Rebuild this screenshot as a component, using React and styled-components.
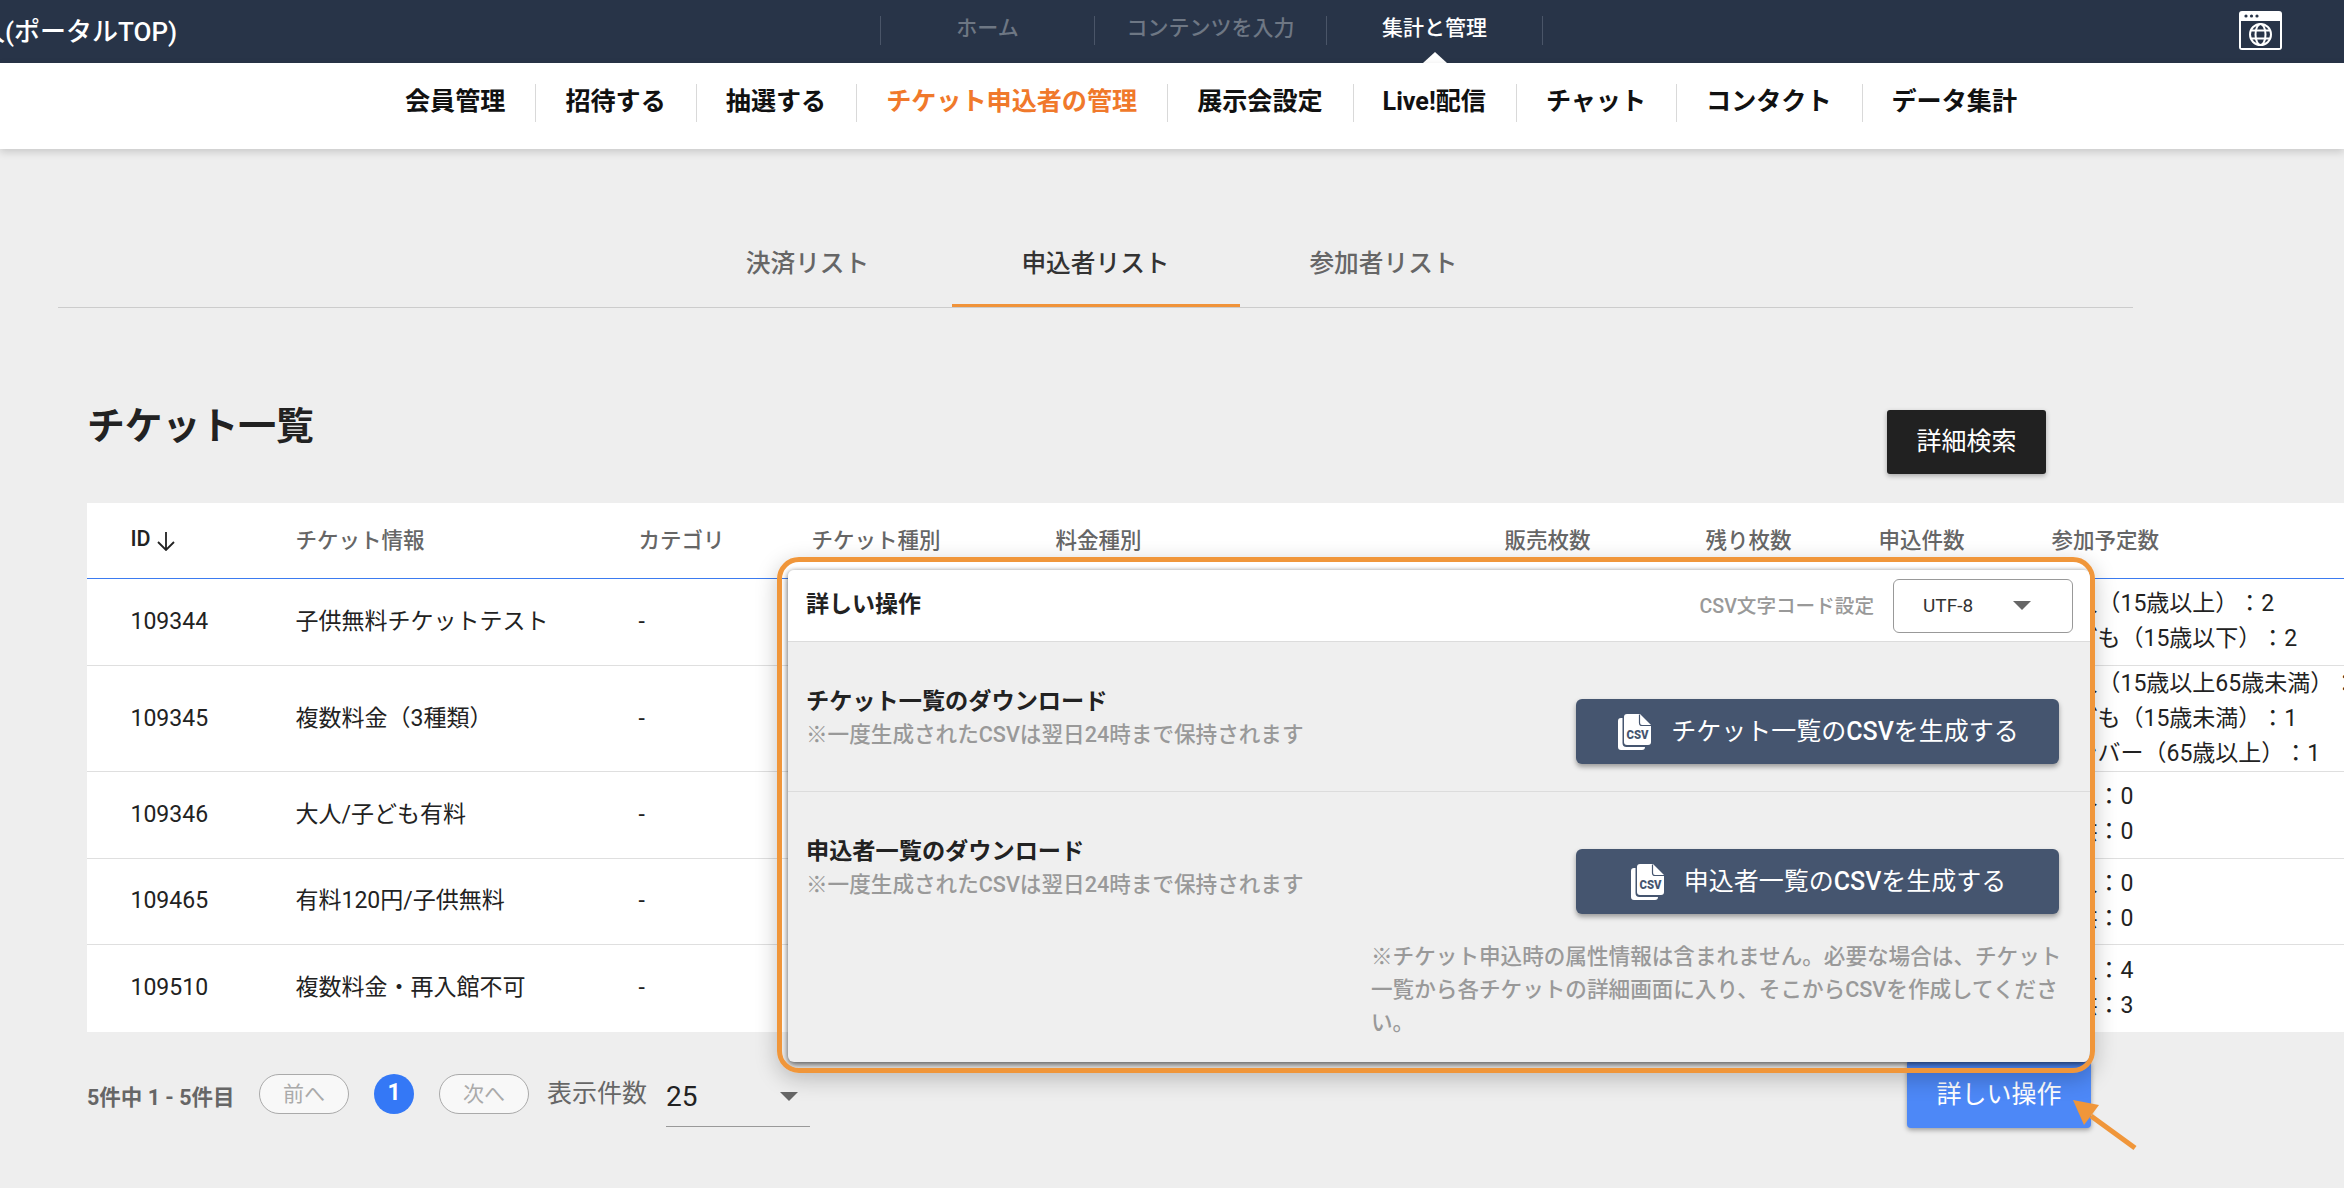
import React from 'react';
import styled, { createGlobalStyle } from 'styled-components';

const Global = createGlobalStyle`
  html, body { margin: 0; padding: 0; background: #eeeeee; }
  * { box-sizing: border-box; }
  body {
    font-family: Roboto, "Noto Sans CJK JP", sans-serif;
    color: #222;
    text-spacing-trim: space-all;
  }
`;

const Page = styled.div`
  position: relative;
  width: 2344px;
  height: 1188px;
  overflow: hidden;
  background: #eeeeee;
`;

/* ---------- top bar ---------- */
const TopBar = styled.header`
  display: flex;
  height: 63px;
  background: #283448;
  overflow: hidden;
`;
const SiteTitle = styled.div`
  flex: none;
  width: 880px;
  height: 63px;
  line-height: 65px;
  text-indent: -21px;
  font-size: 26px;
  font-weight: 500;
  color: #fff;
  white-space: nowrap;
`;
const TopNav = styled.nav`
  display: flex;
  height: 29px;
  margin-top: 16px;
  border-right: 1px solid #4a5568;
`;
const TopItem = styled.a`
  position: relative;
  display: block;
  width: ${p => p.$w}px;
  border-left: 1px solid #4a5568;
  text-align: center;
  font-size: 21px;
  line-height: 25px;
  font-weight: 500;
  color: ${p => (p.$active ? '#ffffff' : '#6e7784')};
  ${p => p.$active && `
    &::after {
      content: '';
      position: absolute;
      left: 50%;
      bottom: -18px;
      margin-left: -12px;
      border-left: 12px solid transparent;
      border-right: 12px solid transparent;
      border-bottom: 11px solid #fff;
    }
  `}
`;
const GlobeButton = styled.div`
  margin: 11px 62px 0 auto;
  width: 43px;
  height: 39px;
  svg { display: block; }
`;

/* ---------- sub nav ---------- */
const SubNav = styled.nav`
  position: relative;
  display: flex;
  height: 86px;
  padding: 21px 0 0 375px;
  background: #fff;
  box-shadow: 0 3px 8px rgba(0, 0, 0, 0.16);
`;
const SubItem = styled.a`
  display: block;
  height: 38px;
  padding: 0 30px 0 29px;
  border-left: ${p => (p.$first ? '1px solid transparent' : '1px solid #d9d9d9')};
  font-size: 25.1px;
  line-height: 36px;
  font-weight: 700;
  white-space: nowrap;
  color: ${p => (p.$active ? '#f0792b' : '#111')};
`;

/* ---------- tabs ---------- */
const Tabs = styled.div`
  display: flex;
  justify-content: center;
  width: 2075px;
  height: 97px;
  margin: 62px 0 0 58px;
  border-bottom: 1px solid #cccccc;
`;
const Tab = styled.a`
  display: block;
  width: 288px;
  height: 96px;
  padding-top: 36px;
  text-align: center;
  font-size: 24.7px;
  line-height: 34px;
  font-weight: 500;
  color: ${p => (p.$active ? '#333' : '#666')};
  border-bottom: 3px solid ${p => (p.$active ? '#f0933a' : 'transparent')};
`;

/* ---------- heading ---------- */
const TitleRow = styled.div`
  display: flex;
  justify-content: space-between;
  width: 1959px;
  height: 64px;
  margin: 102px 0 0 87px;
`;
const Heading = styled.h1`
  margin: 0;
  font-size: 37.8px;
  line-height: 32px;
  font-weight: 700;
  color: #222;
`;
const DarkButton = styled.button`
  width: 159px;
  height: 64px;
  padding: 0 0 6px;
  border: 0;
  border-radius: 3px;
  background: #212121;
  color: #fff;
  font: 400 25px Roboto, "Noto Sans CJK JP", sans-serif;
  box-shadow: 0 2px 5px rgba(0, 0, 0, 0.3);
`;

/* ---------- table ---------- */
const Table = styled.div`
  width: 2257px;
  margin: 29px 0 0 87px;
  background: #fff;
`;
const cols = '165px 343px 173px 244px 449px 201px 173px 173px 292px';
const HeadRow = styled.div`
  display: grid;
  grid-template-columns: ${cols};
  align-items: center;
  height: 76px;
  padding: 0 0 5px 43.5px;
  border-bottom: 1.5px solid #3b7bf0;
`;
const HeadCell = styled.div`
  display: flex;
  align-items: center;
  gap: 5px;
  font-size: 21.5px;
  font-weight: 500;
  white-space: nowrap;
  color: ${p => (p.$dark ? '#222' : '#666')};
  svg { margin-top: 5px; }
`;
const Row = styled.div`
  display: grid;
  grid-template-columns: ${cols};
  align-items: center;
  height: ${p => p.$h}px;
  padding: 0 0 2px 43.5px;
  border-bottom: ${p => (p.$last ? '0' : '1.5px solid #dfdfdf')};
`;
const Cell = styled.div`
  font-size: 23px;
  line-height: 35px;
  color: #222;
  white-space: nowrap;
`;

/* ---------- pagination ---------- */
const Footer = styled.div`
  display: flex;
  align-items: center;
  width: 2004px;
  height: 68px;
  margin: 28px 0 0 87px;
`;
const Count = styled.div`
  width: 172px;
  padding-top: 2px;
  font-size: 21.5px;
  font-weight: 700;
  color: #666;
  white-space: nowrap;
`;
const PageBtn = styled.div`
  width: 90px;
  height: 40px;
  border: 1px solid #aaa;
  border-radius: 20px;
  background: #f8f8f8;
  color: #aaa;
  text-align: center;
  font-size: 21px;
  line-height: 38px;
`;
const PageNum = styled.div`
  width: 40px;
  height: 40px;
  margin: 0 25px;
  border-radius: 50%;
  background: #3478f6;
  color: #fff;
  text-align: center;
  font-size: 23px;
  font-weight: 700;
  line-height: 38px;
`;
const PerPageLabel = styled.div`
  width: 119px;
  margin: -6px 0 0 18px;
  font-size: 25px;
  color: #666;
  white-space: nowrap;
`;
const PerPage = styled.div`
  display: flex;
  align-items: center;
  justify-content: space-between;
  align-self: flex-end;
  width: 144px;
  height: 50px;
  margin-bottom: 1px;
  padding: 0 12px 10px 0;
  border-bottom: 1px solid #999;
  font-size: 28px;
  color: #222;
`;
const Caret = styled.span`
  width: 0;
  height: 0;
  border-left: 9.5px solid transparent;
  border-right: 9.5px solid transparent;
  border-top: 9.5px solid #666;
`;
const BlueButton = styled.button`
  width: 184px;
  height: 68px;
  margin-left: auto;
  padding: 0 0 4px;
  border: 0;
  border-radius: 4px;
  background: #4d88f7;
  color: #fff;
  font: 400 25px Roboto, "Noto Sans CJK JP", sans-serif;
  box-shadow: 0 2px 5px rgba(0, 0, 0, 0.35);
`;

/* ---------- popover ---------- */
const Frame = styled.div`
  position: absolute;
  left: 777px;
  top: 557px;
  width: 1318px;
  height: 516px;
  padding: 8px 0 6px 6px;
  border: 5px solid #f0963a;
  border-radius: 22px;
  overflow: hidden;
  box-shadow: 0 6px 22px rgba(0, 0, 0, 0.22);
`;
const Panel = styled.div`
  display: flex;
  flex-direction: column;
  height: 492px;
  border-radius: 6px;
  background: #efefef;
  box-shadow: 0 3px 7px rgba(0, 0, 0, 0.55), 0 0 4px rgba(0, 0, 0, 0.2);
`;
const PanelHead = styled.div`
  display: flex;
  align-items: center;
  height: 72px;
  padding: 0 17px 0 18px;
  border-bottom: 1.5px solid #dcdcdc;
  border-radius: 6px 6px 0 0;
  background: #fff;
`;
const PanelTitle = styled.div`
  margin-top: -8px;
  font-size: 23px;
  font-weight: 700;
  color: #222;
`;
const EncodingLabel = styled.div`
  margin-left: auto;
  margin-top: -3px;
  font-size: 19.6px;
  font-weight: 500;
  color: #999;
`;
const EncodingSelect = styled.div`
  display: flex;
  align-items: center;
  justify-content: space-between;
  width: 180px;
  height: 54px;
  margin-left: 19px;
  padding: 0 41px 0 29px;
  border: 1px solid #999;
  border-radius: 6px;
  background: #fff;
  font-size: 19px;
  color: #333;
`;
const Section = styled.div`
  display: flex;
  justify-content: space-between;
  height: ${p => p.$h}px;
  padding: ${p => p.$pt}px 31px 0 18px;
  border-bottom: ${p => (p.$line ? '1.5px solid #dcdcdc' : '0')};
`;
const SectionTitle = styled.div`
  font-size: 23.2px;
  line-height: 34px;
  font-weight: 700;
  color: #222;
`;
const SectionSub = styled.div`
  font-size: 21.6px;
  line-height: 33px;
  font-weight: 500;
  color: #999;
  white-space: nowrap;
`;
const CsvButton = styled.button`
  display: flex;
  align-items: center;
  justify-content: center;
  gap: 20px;
  width: 483px;
  height: 65px;
  margin-top: ${p => p.$mt}px;
  padding: 0 0 0 2px;
  border: 0;
  border-radius: 6px;
  background: #45556f;
  color: #fff;
  font: 400 25px Roboto, "Noto Sans CJK JP", sans-serif;
  box-shadow: 0 3px 5px rgba(0, 0, 0, 0.35);
  svg { display: block; flex: none; }
  span { margin-top: -5px; }
  b { font-weight: 500; }
`;
const Note = styled.div`
  width: 702px;
  margin: 26px 0 0 583px;
  font-size: 21.6px;
  line-height: 33px;
  font-weight: 500;
  color: #999;
`;
const ArrowMark = styled.svg`
  position: absolute;
  left: 2060px;
  top: 1090px;
`;

/* ---------- icons ---------- */
const CsvIcon = () => (
  <svg width="33" height="36" viewBox="0 0 33 36">
    <path d="M3 4h1.5v25a4 4 0 0 0 4 4H27a3 3 0 0 1-3 3H3a3 3 0 0 1-3-3V7a3 3 0 0 1 3-3z" fill="#fff" />
    <path d="M9 0H22L33 11V28a3 3 0 0 1-3 3H9a3 3 0 0 1-3-3V3a3 3 0 0 1 3-3z" fill="#fff" />
    <path d="M21.5 .5V9a2.5 2.5 0 0 0 2.5 2.5H33" fill="none" stroke="#45556f" strokeWidth="1.2" />
    <text x="19.5" y="24.5" textAnchor="middle" fontFamily="Roboto, sans-serif" fontWeight="900" fontSize="12" textLength="22" lengthAdjust="spacingAndGlyphs" fill="#45556f">CSV</text>
  </svg>
);
const GlobeIcon = () => (
  <svg width="43" height="39" viewBox="0 0 43 39">
    <rect width="43" height="39" rx="3" fill="#fff" />
    <rect x="2" y="10" width="39" height="27" fill="#283448" />
    <circle cx="7" cy="5" r="1.6" fill="#283448" />
    <circle cx="12.5" cy="5" r="1.6" fill="#283448" />
    <circle cx="18" cy="5" r="1.6" fill="#283448" />
    <g fill="none" stroke="#fff" strokeWidth="2">
      <circle cx="21.5" cy="23.5" r="10.5" />
      <ellipse cx="21.5" cy="23.5" rx="5" ry="10.5" />
      <path d="M12 19.5H31M12 27.5H31" />
    </g>
  </svg>
);
const SortArrow = () => (
  <svg width="20" height="20" viewBox="0 0 20 20" fill="none" stroke="#222" strokeWidth="1.8">
    <path d="M10 1V19M2 11L10 19L18 11" />
  </svg>
);

const tops = [
  { label: 'ホーム', w: 214 },
  { label: 'コンテンツを入力', w: 232 },
  { label: '集計と管理', w: 216, active: true },
];
const subs = ['会員管理', '招待する', '抽選する', 'チケット申込者の管理', '展示会設定', 'Live!配信', 'チャット', 'コンタクト', 'データ集計'];
const heads = ['チケット情報', 'カテゴリ', 'チケット種別', '料金種別', '販売枚数', '残り枚数', '申込件数', '参加予定数'];
const rows = [
  { id: '109344', name: '子供無料チケットテスト', h: 87, plan: ['大人（15歳以上）：2', '子ども（15歳以下）：2'] },
  { id: '109345', name: '複数料金（3種類）', h: 106, plan: ['大人（15歳以上65歳未満）：1', '子ども（15歳未満）：1', 'メンバー（65歳以上）：1'] },
  { id: '109346', name: '大人/子ども有料', h: 87, plan: ['大人：0', '子供：0'] },
  { id: '109465', name: '有料120円/子供無料', h: 86, plan: ['大人：0', '子供：0'] },
  { id: '109510', name: '複数料金・再入館不可', h: 87, plan: ['大人：4', '子供：3'], last: true },
];

export default function App() {
  return (
    <Page>
      <Global />
      <TopBar>
        <SiteTitle>人(ポータルTOP)</SiteTitle>
        <TopNav>
          {tops.map(t => (
            <TopItem key={t.label} $w={t.w} $active={t.active}>{t.label}</TopItem>
          ))}
        </TopNav>
        <GlobeButton><GlobeIcon /></GlobeButton>
      </TopBar>
      <SubNav>
        {subs.map((s, i) => (
          <SubItem key={s} $first={i === 0} $active={i === 3}>{s}</SubItem>
        ))}
      </SubNav>

      <Tabs>
        <Tab>決済リスト</Tab>
        <Tab $active>申込者リスト</Tab>
        <Tab>参加者リスト</Tab>
      </Tabs>

      <TitleRow>
        <Heading>チケット一覧</Heading>
        <DarkButton>詳細検索</DarkButton>
      </TitleRow>

      <Table>
        <HeadRow>
          <HeadCell $dark>ID<SortArrow /></HeadCell>
          {heads.map(h => <HeadCell key={h}>{h}</HeadCell>)}
        </HeadRow>
        {rows.map(r => (
          <Row key={r.id} $h={r.h} $last={r.last}>
            <Cell>{r.id}</Cell>
            <Cell>{r.name}</Cell>
            <Cell>-</Cell>
            <Cell />
            <Cell />
            <Cell />
            <Cell />
            <Cell />
            <Cell>{r.plan.map(p => <div key={p}>{p}</div>)}</Cell>
          </Row>
        ))}
      </Table>

      <Footer>
        <Count>5件中 1 - 5件目</Count>
        <PageBtn>前へ</PageBtn>
        <PageNum>1</PageNum>
        <PageBtn>次へ</PageBtn>
        <PerPageLabel>表示件数</PerPageLabel>
        <PerPage>25<Caret /></PerPage>
        <BlueButton>詳しい操作</BlueButton>
      </Footer>

      <Frame>
        <Panel>
          <PanelHead>
            <PanelTitle>詳しい操作</PanelTitle>
            <EncodingLabel>CSV文字コード設定</EncodingLabel>
            <EncodingSelect>UTF-8<Caret /></EncodingSelect>
          </PanelHead>
          <Section $h={150} $pt={42} $line>
            <div>
              <SectionTitle>チケット一覧のダウンロード</SectionTitle>
              <SectionSub>※一度生成されたCSVは翌日24時まで保持されます</SectionSub>
            </div>
            <CsvButton $mt={15}><CsvIcon /><span>チケット一覧の<b>CSV</b>を生成する</span></CsvButton>
          </Section>
          <Section $h={122} $pt={42}>
            <div>
              <SectionTitle>申込者一覧のダウンロード</SectionTitle>
              <SectionSub>※一度生成されたCSVは翌日24時まで保持されます</SectionSub>
            </div>
            <CsvButton $mt={15}><CsvIcon /><span>申込者一覧の<b>CSV</b>を生成する</span></CsvButton>
          </Section>
          <Note>※チケット申込時の属性情報は含まれません。必要な場合は、チケット一覧から各チケットの詳細画面に入り、そこからCSVを作成してください。</Note>
        </Panel>
      </Frame>

      <ArrowMark width="90" height="70" viewBox="0 0 90 70">
        <path d="M31 26L75 58" stroke="#f0963a" strokeWidth="5" fill="none" />
        <path d="M13 10L39 15L24 35z" fill="#f0963a" />
      </ArrowMark>
    </Page>
  );
}
